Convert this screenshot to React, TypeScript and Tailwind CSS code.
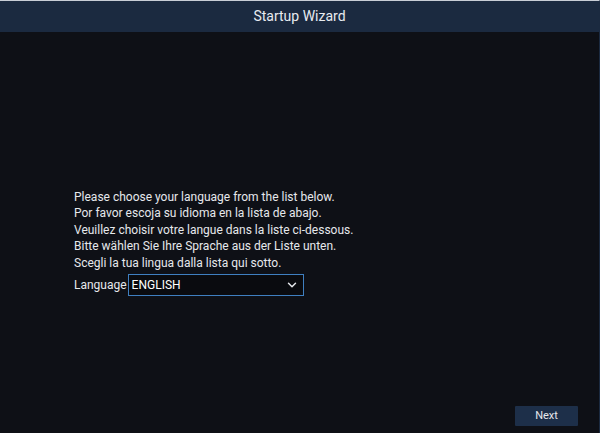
import { ChevronDown } from "lucide-react";

const lines = [
  "Please choose your language from the list below.",
  "Por favor escoja su idioma en la lista de abajo.",
  "Veuillez choisir votre langue dans la liste ci-dessous.",
  "Bitte wählen Sie Ihre Sprache aus der Liste unten.",
  "Scegli la tua lingua dalla lista qui sotto.",
];

export default function App() {
  return (
    <div className="w-[600px] h-[433px] bg-[#0e1016] border-t border-[#c9ced6] border-r border-r-[#1b2a40] flex flex-col font-['Roboto',sans-serif] text-[#e6e8ec]">
      {/* title bar */}
      <div className="h-[31px] shrink-0 bg-[#1b2a40] flex items-center justify-center text-[14px] text-[#e8ebf0]">
        Startup Wizard
      </div>

      <div className="flex-1 flex flex-col pl-[74px] pt-[157px]">
        <div className="flex flex-col text-[12px] leading-[16.4px]">
          {lines.map((l) => (
            <div key={l}>{l}</div>
          ))}
        </div>
        <div className="flex items-center gap-[1px] mt-[3px] text-[12px]">
          <span>Language</span>
          <div className="w-[176px] h-[22px] border border-[#3f7fc0] bg-[#0a0b0f] flex items-center justify-between pl-[3px] pr-[4px]">
            <span className="text-[12px] text-white">ENGLISH</span>
            <ChevronDown size={14} strokeWidth={2.5} className="text-[#e6e8ec]" />
          </div>
        </div>
      </div>

      <div className="flex justify-end pr-[21px] pb-[7px]">
        <button className="w-[63px] h-[20px] bg-[#1d2f49] text-[11px] text-[#e6e8ec] rounded-[1px]">
          Next
        </button>
      </div>
    </div>
  );
}
